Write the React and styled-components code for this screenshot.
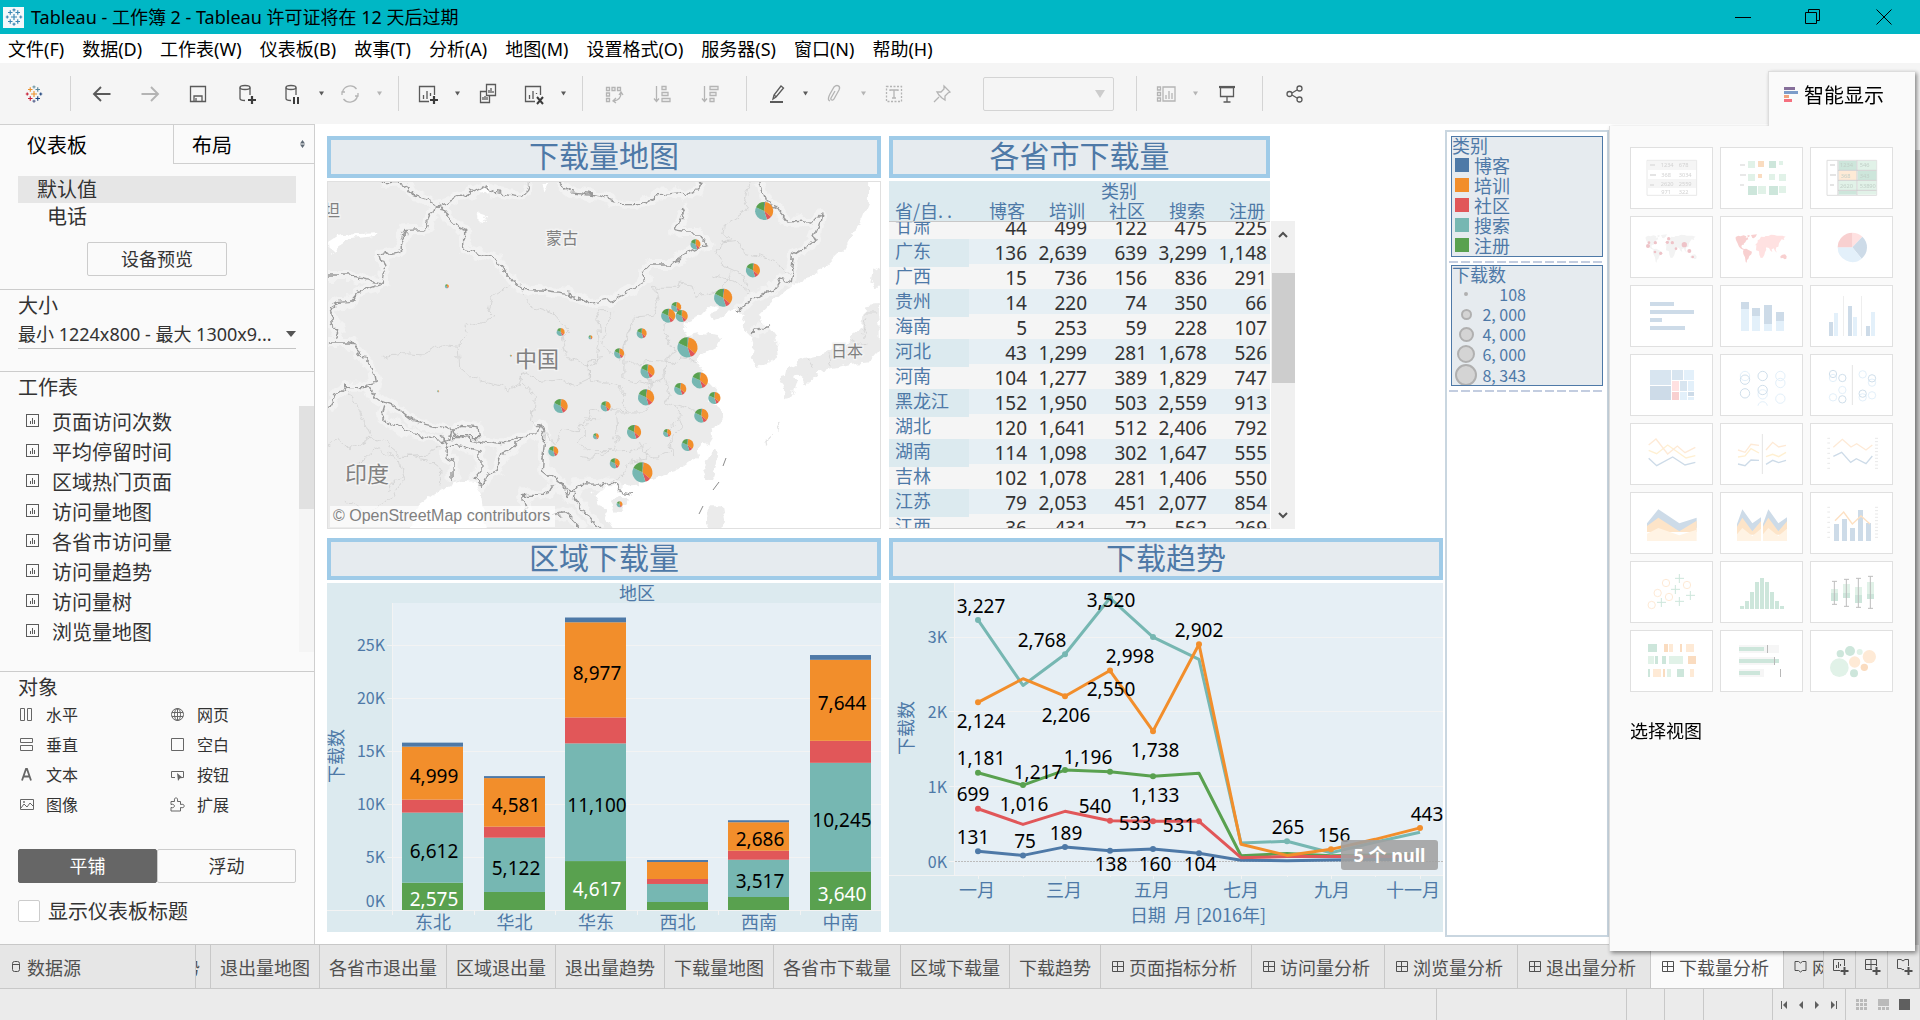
import React from 'react';
import styled, { createGlobalStyle } from 'styled-components';

const BLUE = '#4e79a7';
const ORANGE = '#f28e2b';
const RED = '#e15759';
const TEAL = '#76b7b2';
const GREEN = '#59a14f';

const chartFont = '"Noto Sans CJK SC", sans-serif';
const numberFont = '"Noto Sans", sans-serif';

const GlobalStyle = createGlobalStyle`
    * { box-sizing:border-box; }
    body {
        margin:0;
        overflow:hidden;
        font-family:"Noto Sans", "Noto Sans CJK SC", sans-serif;
        font-size:18px;
        color:#333333;
    }
    button, select, input { font:inherit; color:inherit; }
    button { padding:0; border:0; background:none; }
    svg { display:block; flex:none; }
    ul { margin:0; padding:0; list-style:none; }
`;

const Window = styled.div`
    position:relative;
    display:flex;
    flex-direction:column;
    height:100vh;
    background:#ffffff;
`;

/* ---------- title, menu, toolbar ---------- */

const TitleBar = styled.header`
    display:flex;
    align-items:center;
    height:34px;
    padding-left:3px;
    background:#00b7c5;
    color:#000000;
`;

const AppBadge = styled.span`
    display:flex;
    align-items:center;
    justify-content:center;
    width:21px;
    height:21px;
    margin-right:7px;
    background:#f4f8fa;
`;

const TitleText = styled.span`
    flex:1;
    line-height:34px;
`;

const WindowButton = styled.button`
    display:flex;
    align-items:center;
    justify-content:center;
    width:70px;
    height:34px;
    &:last-child { width:72px; }
`;

const MenuBar = styled.nav`
    display:flex;
    gap:18px;
    height:29px;
    padding-left:8px;
    color:#000000;
`;

const MenuItem = styled.button`
    line-height:31px;
`;

const Toolbar = styled.div`
    display:flex;
    align-items:center;
    height:61px;
    padding-left:10px;
    background:#f5f5f5;
`;

const ToolButton = styled.button`
    display:flex;
    align-items:center;
    justify-content:center;
    width:${p => (p.$menu ? 44 : 48)}px;
    height:34px;
    color:${p => (p.$off ? '#b4b4b4' : '#5a5a5a')};
`;

const Caret = styled.button`
    width:14px;
    height:34px;
    display:flex;
    align-items:center;
    justify-content:center;
    color:${p => (p.$off ? '#b4b4b4' : '#5a5a5a')};
`;

const Divider = styled.span`
    width:1px;
    height:35px;
    margin:0 7px 0 12px;
    background:#d4d4d4;
`;

const FitWrap = styled.div`
    display:flex;
    align-items:center;
    width:131px;
    height:34px;
    margin:0 10px 0 17px;
    padding-right:8px;
    border:1px solid #d4d4d4;
    border-radius:2px;
    color:#cccccc;
`;

const FitSelect = styled.select`
    flex:1;
    height:32px;
    border:0;
    background:none;
    appearance:none;
`;

/* ---------- left pane ---------- */

const Body = styled.div`
    flex:1;
    display:flex;
    min-height:0;
`;

const SidePane = styled.aside`
    display:flex;
    flex-direction:column;
    width:315px;
    background:#fafafa;
    border-top:1px solid #d0d0d0;
    border-right:1px solid #cfcfcf;
    font-size:20px;
`;

const SideTabs = styled.div`
    display:flex;
    height:39px;
    color:#000000;
`;

const SideTab = styled.button`
    display:flex;
    align-items:center;
    justify-content:space-between;
    width:${p => (p.$active ? 173 : 141)}px;
    padding:0 9px 0 ${p => (p.$active ? 27 : 18)}px;
    border-left:${p => (p.$active ? 0 : 1)}px solid #cfcfcf;
    border-bottom:${p => (p.$active ? 0 : 1)}px solid #cfcfcf;
`;

const Section = styled.section`
    height:${p => p.$height}px;
    padding:0 18px;
    border-bottom:${p => (p.$last ? 0 : 1)}px solid #cccccc;
`;

const SectionTitle = styled.div`
    height:${p => p.$height || 31}px;
    line-height:31px;
`;

const Device = styled.div`
    height:27px;
    line-height:28px;
    padding-left:${p => (p.$active ? 19 : 29)}px;
    background:${p => (p.$active ? '#e6e6e6' : 'none')};
`;

const PreviewButton = styled.button`
    display:block;
    width:140px;
    height:34px;
    margin:12px auto 0;
    border:1px solid #cccccc;
    border-radius:2px;
    font-size:18px;
    line-height:32px;
`;

const SizeRow = styled.div`
    display:flex;
    align-items:center;
    height:30px;
    border-bottom:1px solid #c4c4c4;
    color:#555555;
`;

const SizeSelect = styled.select`
    flex:1;
    min-width:0;
    height:29px;
    padding:0;
    border:0;
    background:none;
    appearance:none;
    font-size:18px;
    color:#333333;
`;

const SheetArea = styled.div`
    display:flex;
    justify-content:space-between;
    height:246px;
    margin-right:-18px;
`;

const SheetItem = styled.li`
    display:flex;
    align-items:center;
    gap:12px;
    height:30px;
    padding-left:8px;
    color:#333333;
    svg { color:#5a5a5a; }
`;

const ScrollTrack = styled.div`
    width:15px;
    background:#f5f5f5;
`;

const ScrollThumb = styled.div`
    height:103px;
    background:#e1e1e1;
`;

const ObjectGrid = styled.div`
    display:grid;
    grid-template-columns:151px 1fr;
    grid-auto-rows:30px;
    font-size:16px;
`;

const ObjectItem = styled.button`
    display:flex;
    align-items:center;
    gap:12px;
    padding-left:1px;
    svg { color:#666666; }
`;

const Toggle = styled.div`
    display:flex;
    height:34px;
    margin-top:30px;
    font-size:18px;
`;

const ToggleButton = styled.button`
    flex:1;
    border:1px solid ${p => (p.$active ? '#666666' : '#cccccc')};
    border-radius:2px;
    background:${p => (p.$active ? '#666666' : '#fafafa')};
    color:${p => (p.$active ? '#ffffff' : '#333333')};
    line-height:32px;
`;

const CheckLabel = styled.label`
    display:flex;
    align-items:center;
    gap:8px;
    margin-top:13px;
`;

const CheckBox = styled.input`
    appearance:none;
    width:22px;
    height:22px;
    margin:0;
    border:1px solid #cccccc;
    border-radius:2px;
    background:#ffffff;
`;

/* ---------- dashboard ---------- */

const Dashboard = styled.main`
    flex:1;
    display:flex;
    gap:2px;
    padding:6px 311px 6px 12px;
    min-width:0;
`;

const Tiles = styled.div`
    flex:1;
    display:grid;
    grid-template-columns:1fr 1fr;
    grid-auto-rows:min-content;
    gap:9px 8px;
    padding-top:6px;
`;

const Tile = styled.section`
    min-width:0;
`;

const TileTitle = styled.h2`
    width:${p => p.$width || '100%'};
    height:42px;
    margin:0 0 3px;
    border:4px solid #9fcbe8;
    background:#e6ebef;
    color:${BLUE};
    font:400 30px/28px ${chartFont};
    text-align:center;
`;

const Chart = styled.svg`
    width:100%;
    height:auto;
`;

const MapFrame = styled.div`
    position:relative;
    border:1px solid #e0e0e0;
`;

const TableArea = styled.div`
    display:flex;
    align-items:flex-end;
    height:348px;
`;

const DataTable = styled.table`
    display:flex;
    flex-direction:column;
    width:381px;
    height:348px;
    font-family:${chartFont};
    color:${BLUE};
    border-bottom:1px solid #d0d0d0;
`;

const Head = styled.thead`
    display:block;
    height:41px;
    background:#dceaef;
    border-bottom:1px solid #c8c8c8;
`;

const Rows = styled.tbody`
    display:block;
    flex:1;
    overflow:hidden;
    tr:first-child { margin-top:-8px; }
    tr:nth-child(even) { background:#e6eff4; }
    tr:nth-child(odd) { background:#f5f5f5; }
    tr:nth-child(even) th { background:#dceaef; }
`;

const Row = styled.tr`
    display:grid;
    grid-template-columns:80px repeat(5, 60px);
    height:${p => p.$height}px;
`;

const HeadCell = styled.th`
    grid-column:${p => p.$col || 'auto'};
    padding:0 ${p => (p.$align === 'right' ? 4 : 0)}px 0 ${p => (p.$align === 'left' ? 6 : 0)}px;
    font-weight:400;
    line-height:18px;
    text-align:${p => p.$align};
    white-space:nowrap;
`;

const NameCell = styled.th`
    padding:0 0 0 6px;
    font-weight:400;
    line-height:22px;
    text-align:left;
`;

const NumCell = styled.td`
    padding:0 2px 0 0;
    font-family:${numberFont};
    font-size:19px;
    line-height:28px;
    text-align:right;
    color:#333333;
`;

const TableScroll = styled.div`
    display:flex;
    flex-direction:column;
    align-items:center;
    width:24px;
    height:308px;
    margin-left:1px;
    padding:10px 0;
    background:#f0f0f0;
    color:#505050;
`;

const TableThumb = styled.div`
    width:23px;
    height:110px;
    margin:35px 0 auto;
    background:#cdcdcd;
`;

const NullBadge = styled.button`
    position:absolute;
    right:5px;
    bottom:62px;
    width:97px;
    height:30px;
    border-radius:3px;
    background:rgba(160, 160, 160, 0.88);
    color:#ffffff;
    font-weight:700;
    line-height:30px;
`;

const TrendFrame = styled.div`
    position:relative;
`;

const LegendPane = styled.aside`
    width:164px;
    height:807px;
    padding:4px;
    border:2px solid #c9d6e0;
    font-family:${chartFont};
    color:${BLUE};
`;

const LegendBox = styled.div`
    height:121px;
    border:1px solid ${BLUE};
    background:#e6ebef;
    line-height:16px;
    overflow:hidden;
`;

const LegendTitle = styled.div`
    height:18px;
`;

const LegendItem = styled.div`
    display:flex;
    align-items:center;
    gap:5px;
    height:20px;
    padding-left:3px;
`;

const Swatch = styled.span`
    width:14px;
    height:14px;
    background:${p => p.$color};
`;

const SizeItem = styled.div`
    display:grid;
    grid-template-columns:24px 48px;
    align-items:center;
    height:20px;
    padding-left:2px;
    font-size:16px;
    text-align:right;
    white-space:nowrap;
`;

const Dot = styled.span`
    justify-self:center;
    width:${p => p.$size}px;
    height:${p => p.$size}px;
    border:2px solid #b0b0b0;
    border-radius:50%;
    background:#d4d4d4;
`;

const DashLine = styled.div`
    height:2px;
    margin:4px 0 2px -2px;
    background:repeating-linear-gradient(90deg, #c3cde0 0 9px, transparent 9px 12px);
`;

/* ---------- show me ---------- */

const ShowMe = styled.aside`
    position:absolute;
    top:71px;
    right:5px;
    width:306px;
    filter:drop-shadow(2px 2px 2px rgba(0, 0, 0, 0.45));
    color:#000000;
`;

const ShowMeTab = styled.div`
    display:flex;
    align-items:center;
    gap:6px;
    width:147px;
    height:55px;
    margin-left:auto;
    padding:0 0 9px 15px;
    background:#fafafa;
    border-top:1px solid #dddddd;
    border-left:1px solid #dddddd;
    font-size:20px;
`;

const ShowMeBody = styled.div`
    height:825px;
    padding:21px 20px;
    background:#fafafa;
    border-left:1px solid #dddddd;
`;

const Cards = styled.div`
    display:grid;
    grid-template-columns:repeat(3, 83px);
    grid-auto-rows:62px;
    gap:7px;
`;

const Card = styled.button`
    display:flex;
    border:1px solid #e0e0e0;
    background:#ffffff;
`;

const CardArt = styled.svg`
    width:81px;
    height:60px;
`;

const Hint = styled.p`
    margin:25px 0 0;
    line-height:28px;
`;

const EdgeBar = styled.div`
    position:absolute;
    top:124px;
    right:0;
    width:5px;
    height:820px;
    background:linear-gradient(#f5f5f5 26px, #c8c8c8 26px);
`;

/* ---------- bottom ---------- */

const SheetTabs = styled.nav`
    display:flex;
    height:45px;
    background:#e6e6e6;
    border-top:1px solid #c8c8c8;
    border-bottom:1px solid #c8c8c8;
    color:#505050;
`;

const SheetTab = styled.button`
    display:flex;
    flex:none;
    align-items:center;
    gap:5px;
    padding:0 ${p => (p.$icon ? 14 : 9)}px 0 ${p => (p.$icon ? 11 : 9)}px;
    border-right:1px solid #c8c8c8;
    background:${p => (p.$active ? '#fafafa' : 'none')};
    white-space:nowrap;
`;

const SourceTab = styled(SheetTab)`
    width:196px;
    padding-left:12px;
    gap:6px;
`;

const CutTab = styled(SheetTab)`
    justify-content:${p => (p.$start ? 'flex-end' : 'flex-start')};
    flex:${p => (p.$start ? 'none' : '1')};
    width:15px;
    min-width:0;
    padding:0 ${p => (p.$start ? 10 : 0)}px 0 ${p => (p.$start ? 0 : 10)}px;
    overflow:hidden;
`;

const AddTab = styled(SheetTab)`
    justify-content:center;
    width:32px;
    padding:0;
`;

const StatusBar = styled.footer`
    display:flex;
    justify-content:flex-end;
    height:31px;
    background:#ebebeb;
    color:#5f5f5f;
`;

const StatusCell = styled.div`
    display:flex;
    align-items:center;
    justify-content:space-evenly;
    width:${p => p.$width}px;
    border-left:1px solid #c8c8c8;
`;

/* ---------- icons ---------- */

const Line = ({ size = 24, children, ...rest }) => (
    <svg width={size} height={size} viewBox="0 0 24 24" fill="none" stroke="currentColor" strokeWidth="1.3" {...rest}>
        {children}
    </svg>
);

const crosses = [
    [12, 12, 4, '#eb912c'], [7, 6, 3, '#eb912c'], [17, 6, 3, '#59879b'],
    [7, 18, 3, '#c72037'], [17, 18, 3, '#1f457e'], [12, 2.5, 2, '#7199a6'],
    [12, 21.5, 2, '#5b6591'], [3, 12, 2, '#c72037'], [21, 12, 2, '#1f457e'],
];

function Logo({ color }) {
    return (
        <svg width="18" height="18" viewBox="0 0 24 24" strokeWidth="1.5">
            {crosses.map(([x, y, r, c]) => (
                <path key={`${x}-${y}`} d={`M${x - r} ${y}H${x + r}M${x} ${y - r}V${y + r}`} stroke={color || c} />
            ))}
        </svg>
    );
}

const Down = ({ size = 5 }) => (
    <svg width={size} height={size} viewBox="0 0 10 10"><path d="M0 1h10L5 9z" fill="currentColor" /></svg>
);

const WideDown = () => (
    <svg width="10" height="6"><path d="M0 0h10L5 6z" fill="currentColor" /></svg>
);

const SheetIcon = ({ size = 14 }) => (
    <svg width={size} height={size} viewBox="0 0 14 14" fill="none" stroke="currentColor">
        <rect x=".5" y=".5" width="12" height="12" />
        <path d="M4.5 10V7M6.5 10V4M8.5 10V6" />
    </svg>
);

const BoardIcon = () => (
    <svg width="12" height="13" viewBox="0 0 12 13" fill="none" stroke="currentColor">
        <path d="M.5 1.5h11v10H.5zM5.5 1.5v10M.5 6.5h11" />
    </svg>
);

const StoryIcon = () => (
    <svg width="13" height="13" viewBox="0 0 13 13" fill="none" stroke="currentColor">
        <path d="M1 1.5h3.5L6.5 3l2-1.5H12v9H8.5L6.5 12l-2-1.5H1z" />
    </svg>
);

const plus = <path d="M18 14v8M14 18h8" stroke="#3c3c3c" strokeWidth="2.2" />;

const tools = [
    { id: 'logo', art: <Logo /> },
    { id: 's1', sep: true },
    { id: 'back', art: <Line><path d="M20.5 12H4.5M11 5l-7 7 7 7" strokeWidth="1.9" /></Line> },
    { id: 'forward', off: true, art: <Line><path d="M3.5 12h16M13 5l7 7-7 7" strokeWidth="1.9" /></Line> },
    { id: 'save', art: <Line><path d="M4.5 4.5h15v15h-15zM8 19v-5h8v5M10 19v-3" /></Line> },
    { id: 'data', art: <Line><ellipse cx="11" cy="5.5" rx="5" ry="2" /><path d="M6 5.5v11c0 1 2 2 5 2M16 5.5V13" />{plus}</Line> },
    { id: 'pause', menu: true, art: <Line><ellipse cx="11" cy="5.5" rx="5" ry="2" /><path d="M6 5.5v11c0 1 2 2 5 2M16 5.5V13" /><path d="M14 15v7M18 15v7" stroke="#3c3c3c" strokeWidth="2" /></Line> },
    { id: 'refresh', menu: true, off: true, art: <Line><path d="M4.5 10a8 8 0 0 1 14-3M19.5 14a8 8 0 0 1-14 3M4 13v-3h3M20 11v3h-3" /></Line> },
    { id: 's2', sep: true },
    { id: 'sheet', menu: true, art: <Line><path d="M13 19.5H3.5v-15h15V13M7.5 17v-4M11 17V9M14.5 14v-3" />{plus}</Line> },
    { id: 'copy', art: <Line><path d="M10.5 2.5h9v11h-9zM10 9.5H4.5v11h9V14M13 11V8M15 11V6M17 11V9M7 18v-3M9 18v-4M11 18v-3" /></Line> },
    { id: 'clear', menu: true, art: <Line><path d="M13 19.5H3.5v-15h15V13M7.5 17v-4M11 17V9M14.5 12v-1" /><path d="M15 15l6 7M21 15l-6 7" stroke="#3c3c3c" strokeWidth="2" /></Line> },
    { id: 's3', sep: true },
    { id: 'swap', off: true, art: <Line><path d="M4.5 5.5h3v3h-3zM10 5.5h3v3h-3zM15.5 5.5h3v3h-3zM4.5 11h3v3h-3zM4.5 16.5h3v3h-3zM19 11c0 5-2 7-7 8M17 13l2-3 2 3M14 16l-3 3 3 2" /></Line> },
    { id: 'asc', off: true, art: <Line><path d="M6.5 4v15M4 16.5l2.5 3 2.5-3M12 4.5h4v3h-4zM12 10.5h6v3h-6zM12 16.5h8v3h-8z" /></Line> },
    { id: 'desc', off: true, art: <Line><path d="M6.5 4v15M4 16.5l2.5 3 2.5-3M12 4.5h8v3h-8zM12 10.5h6v3h-6zM12 16.5h4v3h-4z" /></Line> },
    { id: 's4', sep: true },
    { id: 'mark', menu: true, art: <Line><path d="M9 17l1-4 7-9 2.5 2L12 15zM10 13l2.5 2" /><path d="M6 20h13" strokeWidth="2" /></Line> },
    { id: 'clip', menu: true, off: true, art: <Line><path d="M8 19c-3-1-1-5 0-7l4-7c3-3 7-1 5 3l-5 9c-1 2-4 1-3-1l4-7" /></Line> },
    { id: 'text', off: true, art: <Line><path d="M4.5 4.5h15v15h-15z" strokeDasharray="2 1.5" /><path d="M8 9V8h8v1M12 8v8M10 16h4" /></Line> },
    { id: 'pin', off: true, art: <Line><path d="M14 4l6 6-2 1-3 3v4l-3-2-3-3-2-3 4 0 3-3zM9 15l-5 5" /></Line> },
    { id: 'fit', fit: true },
    { id: 's5', sep: true },
    { id: 'cards', menu: true, off: true, art: <Line><path d="M3.5 5h3v3h-3zM3.5 10.5h3v3h-3zM3.5 16h3v3h-3zM9 5h12v14H9zM12 17v-4M15 17V9M18 17v-6" /></Line> },
    { id: 'present', art: <Line><path d="M6.5 5.5h13v9h-13zM13 15v5M9.5 20h7" /><path d="M5 5h16" strokeWidth="2.2" /></Line> },
    { id: 's6', sep: true },
    { id: 'share', art: <Line><circle cx="7.5" cy="12" r="2.5" /><circle cx="17.5" cy="6.5" r="2.5" /><circle cx="17.5" cy="17.5" r="2.5" /><path d="M10 11l5-3M10 13l5 3" /></Line> },
];

const menus = ['文件(F)', '数据(D)', '工作表(W)', '仪表板(B)', '故事(T)', '分析(A)', '地图(M)', '设置格式(O)', '服务器(S)', '窗口(N)', '帮助(H)'];

const sheets = ['页面访问次数', '平均停留时间', '区域热门页面', '访问量地图', '各省市访问量', '访问量趋势', '访问量树', '浏览量地图'];

const Small = ({ children }) => (
    <svg width="15" height="15" viewBox="0 0 15 15" fill="none" stroke="currentColor">{children}</svg>
);

const objects = [
    ['水平', <Small><path d="M1.5 1.5h4v12h-4zM8.5 1.5h4v12h-4z" /></Small>],
    ['网页', <Small><circle cx="7.5" cy="7.5" r="6" /><ellipse cx="7.5" cy="7.5" rx="3" ry="6" /><path d="M7.5 1.5v12M2 5.5h11M2 9.5h11" /></Small>],
    ['垂直', <Small><path d="M1.5 1.5h12v4h-12zM1.5 8.5h12v5h-12z" /></Small>],
    ['空白', <Small><path d="M1.5 1.5h12v12h-12z" /></Small>],
    ['文本', <Small><path d="M3 13.5L7 2h1l4 11.5M4.5 9.5h6" strokeWidth="1.8" /></Small>],
    ['按钮', <Small><path d="M5 10.5H1.5v-6h12v6H12" /><path d="M7 6l6 5-3 .2L8 14z" fill="currentColor" stroke="none" /></Small>],
    ['图像', <Small><path d="M1.5 2.5h13v10h-13zM2 11l3-4 3 3 3-4 3 3" /><circle cx="5" cy="5" r=".6" /></Small>],
    ['扩展', <Small><path d="M1 4.5h3.5C3.5-.5 8.5-.5 7.5 4.5H10.5V7.5C15.5 6 15.5 12 10.5 10.5V14H1V10.5C5.5 12 5.5 6 1 7.5z" /></Small>],
];

/* ---------- map ---------- */

const water = [
    'M1508 160L1507 240 1485 300 1440 370 1395 420 1350 455 1325 462 1290 490 1240 530 1207 566 1225 600 1258 650 1262 690 1230 715 1200 722 1188 700 1195 660 1183 625 1160 600 1168 570 1145 556 1120 560 1082 588 1070 578 1092 548 1072 538 1045 570 1010 586 998 610 1012 632 1050 626 1112 634 1098 662 1060 684 1035 708 1062 760 1096 800 1072 828 1102 850 1104 872 1085 912 1058 960 1030 1000 985 1032 920 1052 870 1075 832 1080 834 1106 818 1104 814 1080 786 1076 752 1108 780 1160 826 1240 1570 1240 1570 160z',
    'M248 1240L272 1140 328 1096 372 1076 400 1066 428 1070 444 1110 448 1160 466 1240z',
    'M22 350L50 330 150 324 148 332 80 342 50 362 36 386 24 374z',
    'M432 276l12-10 10 4-6 12-14 10z',
    'M438 192l20-8 14 6-16 18z',
    'M612 170l16 0-10 24z',
];

const islands = [
    'M1085 976l12 8-6 32-12 38-16 8-8-30 14-38z',
    'M806 1122l26-8 16 10-12 26-26 6-10-18z',
    'M1070 1146l30 0 6 40-12 60-32 0z',
    'M1570 412l-47 20-6 38 12 20 41 0z',
    'M1500 540L1534 536 1542 600 1543 670 1513 708 1473 712 1423 726 1373 736 1333 762 1313 748 1283 754 1290 722 1333 698 1393 682 1433 668 1463 632 1493 612z',
    'M1270 752l30-8 14 26-12 40-20 6-4-34-18-8z',
    'M1322 752l36-14 8 14-34 24z',
];

const provinces = [
    'M530 478L476 516 468 560 480 574 394 600 408 634 380 664 384 726 420 760 500 784 520 800 550 780 562 740 600 766 660 760 700 780 740 760 742 704 778 700',
    'M170 696L230 682 290 686 340 658 390 664',
    'M554 470l0 40 30 36 60 20 40 50-20 20 14 60 60 30 20-10 10-66-6-64 12-30 26 0-12 46-10 54 26 34',
    'M560 740l0 34 30 46-8 60 50 60 16 12 20-40 36 10 10-22 24 2',
    'M740 704l2 60 74 16 24 30-12 14 20 30-60-6-46 6-8 26 40 0',
    'M824 700l20-70 12-36 20-20 44-4 10-30-10-54 60 0 6-16 40 6 6 40 64-20 24-30 10-30',
    'M840 716l70-8 54 4 34-14 44 12M860 580l-24 90 0 90 70 16 44-14-4-60 34-20-30-60 6-60',
    'M906 760l10 60-24 40-80 0 6 70-14 46-56 0-40-20 20-30-8-30 26-14',
    'M950 740l16 50-20 40 30 10 20 30-40 50 10 54-40 22-38-10-12-40',
    'M976 840l60 20 20-10M990 870l8 30-32 40 4 50M906 970l-8 30-50 10-20 46-34 10',
    'M716 990l30 6 40-14 60-4 50-16',
    'M1186 170l-20 70 10 14-64 46-4 24 20 20-30 14-6 26 16 36 60 30 6 30',
    'M1110 352l40-4 10 30 40 10 40 16 50 36M1080 450l60 16 40 36',
    'M22 960l30-20 30 30 60-30 40 14 46 40 60-4 40-30M90 1030l60-60 70 30 14 60-40 60-70 40-50-30',
    'M70 790l30 50 40 90-20 20M230 990l60 10 50 40-10 40M180 1090l46-40',
    'M1500 560l30 0M1510 576l-20 60M1340 700l20 30M1400 690l10 30M1460 640l40 20',
];

const borders = [
    'M170 172l50 0 24 14 16 24 40 14 30 20 14 20 36 40 18 8 0 60 90 28 20 34 46 58 50 2 80 10 60 30 60-12 60-34 34-22-8-30 16-20 60 0 60-40 30-14 14-4-30-38-40 0-22-4 24-60-6-14',
    'M334 240l50-24 60-34 42 22 60 10 24-14 6-28',
    'M658 172l26 26 90 14 60 26 50 0 50-30 60-6 10 12 30-18 12-24',
    'M334 240l-30 20-12 50-56 2-16 64-54 14 14 50-6 36-70 26-24 30-30 2-22 16 6 46 20 20-8 20',
    'M22 452l60 0 40 10 50 12',
    'M22 650l60 0 30 40 32 40 8 44-20 6 20 40 50 20 60 50 90 24 46 26 80 12 40 4 30-24 46-4 10-30 14 34-6 100 46 40 20 40 26-36 60 4 40-12 20 30 34 10',
    'M178 846l-8 30 60 40 100 30 30-10 4-26M370 920l20-20 42 4 4 30-66 0z',
    'M330 930l20 20 0 50 16 10 0 60M350 960l30 0 60 16 0 60-16 20 20 30 20-40 26-10 14-56 30-16 24-30',
    'M22 850l30-50 20-16 60 0M640 1080l-20 30-60 0 6 40-20 20M650 1060l24 30 30 10-4 20 30 40 40 50M640 1170l40-10 46 54',
    'M1210 170l16 60 30 14 34 46 66-4 22-20-6 40-20 50-50 36-8 80-30-10-20 36-50 16-50 50',
    'M1188 622l20-4 12-14 18-6',
];

const pies = [
    [1222, 257, 9], [1033, 357, 5], [1191, 435, 7], [1109, 517, 9], [980, 545, 5], [958, 571, 7],
    [995, 572, 6], [349, 483, 2], [662, 620, 4], [744, 636, 2], [885, 624, 5], [823, 684, 5],
    [1011, 666, 10], [525, 691, 1], [901, 738, 7], [1045, 765, 8], [991, 791, 6], [897, 816, 8],
    [1085, 818, 6], [325, 798, 1], [662, 842, 7], [786, 843, 5], [1049, 871, 7], [864, 920, 7],
    [955, 923, 4], [759, 933, 3], [1011, 959, 6], [642, 978, 5], [811, 1014, 5], [887, 1041, 10], [824, 1137, 3],
];

const slices = [[0.02, BLUE], [0.36, ORANGE], [0.45, RED], [0.82, TEAL], [1, GREEN]];

const mapX = x => (x - 22) / 2.751;
const mapY = y => (y - 170) / 3;

function Pie({ x, y, r, parts = slices }) {
    let from = 0;
    return parts.map(([to, color]) => {
        const a = from * Math.PI * 2;
        const b = to * Math.PI * 2;
        const large = to - from > 0.5 ? 1 : 0;
        from = to;
        const d = `M${x} ${y}L${x + r * Math.sin(a)} ${y - r * Math.cos(a)}A${r} ${r} 0 ${large} 1 ${x + r * Math.sin(b)} ${y - r * Math.cos(b)}z`;
        return <path key={color} d={d} fill={color} />;
    });
}

function DownloadMap() {
    return (
        <MapFrame>
            <Chart viewBox="0 0 552 346">
                <defs>
                    {/* roughens coastlines and borders */}
                    <filter id="rough" x="-5%" y="-5%" width="110%" height="110%">
                        <feTurbulence type="fractalNoise" baseFrequency="0.09" numOctaves="3" seed="4" result="noise" />
                        <feDisplacementMap in="SourceGraphic" in2="noise" scale="11" xChannelSelector="R" yChannelSelector="G" />
                    </filter>
                </defs>
                <rect width="552" height="346" fill="#ebebeb" />
                <g filter="url(#rough)">
                    <g transform="scale(0.3635 0.3333) translate(-22 -170)" fill="none" strokeLinejoin="round">
                        {borders.map(d => <path key={d} d={d} stroke="#f2f2f2" strokeWidth="30" />)}
                        {water.map(d => <path key={d} d={d} fill="#ffffff" />)}
                        {islands.map(d => <path key={d} d={d} fill="#ebebeb" />)}
                        {provinces.map(d => <path key={d} d={d} stroke="#cccccc" strokeWidth="2" />)}
                        {borders.map(d => <path key={d} d={d} stroke="#999999" strokeWidth="4" />)}
                        <path d="M1270 890l-14 26M1240 930l-16 24" stroke="#e4e4e4" strokeWidth="4" />
                    </g>
                </g>
                <path d="M398 276l-3 8M391 300l-6 8M375 324l-4 8" stroke="#8c8c8c" />
                <g fontFamily={chartFont} fill="#808080" stroke="#f2f2f2" strokeWidth="3" paintOrder="stroke" textAnchor="middle">
                    <text x="4" y="34" fontSize="16">坦</text>
                    <text x="234" y="62" fontSize="16">蒙古</text>
                    <text x="519" y="175" fontSize="16">日本</text>
                    <text x="209" y="185" fontSize="22">中国</text>
                    <text x="39" y="300" fontSize="22">印度</text>
                </g>
                {pies.map(([x, y, r]) => <Pie key={`${x}-${y}`} x={mapX(x)} y={mapY(y)} r={r} />)}
                <rect x="2" y="324" width="225" height="21" fill="#ffffff" fillOpacity="0.7" />
                <text x="5" y="339" fontSize="16" fontFamily='"Liberation Sans", sans-serif' fill="#808080">© OpenStreetMap contributors</text>
            </Chart>
        </MapFrame>
    );
}

/* ---------- table ---------- */

const kinds = ['博客', '培训', '社区', '搜索', '注册'];

const provinceRows = [
    ['甘肃', '44', '499', '122', '475', '225'],
    ['广东', '136', '2,639', '639', '3,299', '1,148'],
    ['广西', '15', '736', '156', '836', '291'],
    ['贵州', '14', '220', '74', '350', '66'],
    ['海南', '5', '253', '59', '228', '107'],
    ['河北', '43', '1,299', '281', '1,678', '526'],
    ['河南', '104', '1,277', '389', '1,829', '747'],
    ['黑龙江', '152', '1,950', '503', '2,559', '913'],
    ['湖北', '120', '1,641', '512', '2,406', '792'],
    ['湖南', '114', '1,098', '302', '1,647', '555'],
    ['吉林', '102', '1,078', '281', '1,406', '550'],
    ['江苏', '79', '2,053', '451', '2,077', '854'],
    ['江西', '36', '431', '72', '562', '269'],
];

function ProvinceTable() {
    return (
        <TableArea>
            <DataTable>
                <Head>
                    <Row $height={20}><HeadCell $col="2 / 7" $align="center">类别</HeadCell></Row>
                    <Row $height={20}>
                        <HeadCell $align="left">省/自. .</HeadCell>
                        {kinds.map(k => <HeadCell key={k} $align="right">{k}</HeadCell>)}
                    </Row>
                </Head>
                <Rows>
                    {provinceRows.map(([name, ...values]) => (
                        <Row key={name} $height={25}>
                            <NameCell>{name}</NameCell>
                            {values.map((v, i) => <NumCell key={kinds[i]}>{v}</NumCell>)}
                        </Row>
                    ))}
                </Rows>
            </DataTable>
            <TableScroll>
                <svg width="10" height="7" viewBox="0 0 10 7" fill="none" stroke="currentColor" strokeWidth="2"><path d="M1 6l4-4 4 4" /></svg>
                <TableThumb />
                <svg width="10" height="7" viewBox="0 0 10 7" fill="none" stroke="currentColor" strokeWidth="2"><path d="M1 1l4 4 4-4" /></svg>
            </TableScroll>
        </TableArea>
    );
}

/* ---------- bars ---------- */

const stack = [GREEN, TEAL, RED, ORANGE, BLUE];

const regions = [
    { name: '东北', values: [2575, 6612, 1226, 4999, 377], labels: [0, 1, 3] },
    { name: '华北', values: [1700, 5122, 1040, 4581, 190], labels: [1, 3] },
    { name: '华东', values: [4617, 11100, 2450, 8977, 450], labels: [0, 1, 3] },
    { name: '西北', values: [755, 1700, 470, 1600, 190], labels: [] },
    { name: '西南', values: [1226, 3517, 850, 2686, 190], labels: [1, 3] },
    { name: '中南', values: [3640, 10245, 2075, 7644, 450], labels: [0, 1, 3] },
];

function RegionBars() {
    return (
        <Chart viewBox="0 0 554 349">
            <rect width="554" height="349" fill="#dceaef" />
            <rect x="66" y="20" width="488" height="307" fill="#e6eff5" />
            <g stroke="#f3f3f3">
                {[62, 115, 168, 221, 274].map(y => <path key={y} d={`M60 ${y}.5H554`} />)}
                <path d="M65.5 20V332M0 327.5H554" />
                {[147, 228, 310, 391, 473].map(x => <path key={x} d={`M${x}.5 327V332`} />)}
            </g>
            <g fontFamily={chartFont} fill={BLUE} fontSize="18" textAnchor="middle">
                <text x="310" y="17">地区</text>
                <text transform="translate(16 173) rotate(-90)">下载数</text>
                {regions.map((r, i) => <text key={r.name} x={106 + i * 81.5} y="346">{r.name}</text>)}
            </g>
            <g fontFamily={chartFont} fill={BLUE} fontSize="16" textAnchor="end">
                {['25K', '20K', '15K', '10K', '5K'].map((t, i) => <text key={t} x="58" y={68 + i * 53}>{t}</text>)}
                <text x="58" y="324">0K</text>
            </g>
            {regions.map((r, i) => {
                const left = Math.round(75 + i * 81.5);
                let y = 327;
                return r.values.map((v, k) => {
                    const h = v * 0.0106;
                    y -= h;
                    return (
                        <g key={stack[k]}>
                            <rect x={left} y={y} width="61" height={h} fill={stack[k]} />
                            {r.labels.includes(k) && (
                                <text x={left + 32} y={y + h / 2 + 10} fontFamily={numberFont} fontSize="19" textAnchor="middle" fill={k === 0 ? '#ffffff' : '#000000'}>
                                    {v.toLocaleString('en-US')}
                                </text>
                            )}
                        </g>
                    );
                });
            })}
        </Chart>
    );
}

/* ---------- trend ---------- */

const months = [89, 134, 176, 221, 264, 310, 352, 398, 442, 486, 531];

const series = [
    { color: BLUE, values: [131, 75, 189, 138, 160, 104, 10, 5, 12, 20, 20], dots: [0, 1, 2, 3, 4, 5] },
    { color: GREEN, values: [1181, 1016, 1217, 1196, 1133, 1175, 70, 100, 70, 80, 90], dots: [0, 1, 2, 3, 4] },
    { color: RED, values: [699, 490, 665, 540, 533, 531, 45, 60, 60, 60, 60], dots: [0, 3, 4, 5] },
    { color: TEAL, values: [3227, 2350, 2768, 3520, 2998, 2700, 240, 265, 110, 250, 385], dots: [0, 2, 3, 4, 7] },
    { color: ORANGE, values: [2124, 2440, 2206, 2550, 1738, 2902, 225, 75, 156, 290, 443], dots: [0, 2, 3, 4, 5, 8, 10] },
];

const trendLabels = [
    ['3,227', 92, 30], ['3,520', 222, 24], ['2,902', 310, 54], ['2,768', 153, 64], ['2,998', 241, 80],
    ['2,550', 222, 113], ['2,206', 177, 139], ['2,124', 92, 145], ['1,738', 266, 174], ['1,181', 92, 182],
    ['1,196', 199, 181], ['1,217', 149, 196], ['1,133', 266, 219], ['699', 84, 218], ['1,016', 135, 228],
    ['540', 206, 230], ['533', 246, 247], ['531', 290, 249], ['131', 84, 261], ['75', 136, 265],
    ['189', 177, 257], ['138', 222, 288], ['160', 266, 288], ['104', 311, 288], ['265', 399, 251],
    ['156', 445, 259], ['443', 538, 238],
];

const monthTicks = [['一月', 88], ['三月', 175], ['五月', 263], ['七月', 352], ['九月', 443], ['十一月', 524]];

const trendY = v => 278 - v * 0.0747;

function TrendLines() {
    return (
        <TrendFrame>
            <Chart viewBox="0 0 554 349">
                <rect width="554" height="349" fill="#dceaef" />
                <rect x="66" width="488" height="292" fill="#e6eff5" />
                <g stroke="#f3f3f3" fill="none">
                    {[54, 128, 203].map(y => <path key={y} d={`M60 ${y}.5H554`} />)}
                    <path d="M65.5 0V292M0 292.5H554M60 278.5H66" />
                    {months.map((x, i) => <path key={x} d={`M${x}.5 292v${i % 2 ? 2 : 4}`} />)}
                    <path d="M66 278.5H554" stroke="#bcbcbc" strokeDasharray="2 1" />
                </g>
                {series.map(s => (
                    <g key={s.color} fill={s.color}>
                        <polyline points={s.values.map((v, i) => `${months[i]},${trendY(v)}`).join(' ')} fill="none" stroke={s.color} strokeWidth="3" strokeLinejoin="round" />
                        {s.dots.map(i => <circle key={i} cx={months[i]} cy={trendY(s.values[i])} r="3" />)}
                    </g>
                ))}
                <g fontFamily={numberFont} fontSize="19" fill="#000000" textAnchor="middle">
                    {trendLabels.map(([t, x, y]) => <text key={t} x={x} y={y}>{t}</text>)}
                </g>
                <g fontFamily={chartFont} fill={BLUE} fontSize="18" textAnchor="middle">
                    <text transform="translate(24 145) rotate(-90)">下载数</text>
                    {monthTicks.map(([t, x]) => <text key={t} x={x} y="314">{t}</text>)}
                    <text x="309" y="339" xmlSpace="preserve">日期  月 [2016年]</text>
                </g>
                <g fontFamily={chartFont} fill={BLUE} fontSize="16" textAnchor="end">
                    {['3K', '2K', '1K', '0K'].map((t, i) => <text key={t} x="58" y={60 + i * 75}>{t}</text>)}
                </g>
            </Chart>
            <NullBadge>5 个 null</NullBadge>
        </TrendFrame>
    );
}

/* ---------- chart cards ---------- */

const continents = [
    ['M0 6l8-4 6 2 10-3 8 3-2 5 6-2 2 6-6 3-3 6-5 4 0 4-4-1-3 4 2 6 6 3-1 3-8-4-6-6-5-12-3-6-2-5z', 'n-america'],
    ['M25 42l7-1 8 5 9 4-2 8-6 5-3 8-4 4-1 8-3-2-2-14-5-10-1-8z', 's-america'],
    ['M34 2l6-2 3 3-5 4zM46 0l18-2-4 7-6 5-4-1z', 'greenland'],
    ['M62 33l6-5 8 0 10 4 6 12 -4 8-2 8-5 8-6 1-4-10-1-10-9-3z', 'africa'],
    ['M66 22l0-6 6-3 4-8 10 1 4-3 8 0 8-4 10 1 8 2 16 0 10 3-6 4 2 6-8-2-4 6-4 6-2 10-6 2-2 8 4 8-6-5-4-8-6 3 2 8-5-3-5-9-8-2-2 6-8 3-3-9-4-3-10 0-5-4-4 3z', 'eurasia'],
    ['M134 64l6-5 8-1 5 6-1 7-5 2-5-4-7 1z', 'australia'],
];

const World = ({ west, east }) => continents.map(([d, name]) => (
    <path key={name} transform="translate(47 57)" d={d} fill={name === 'africa' || name === 'eurasia' ? east : west} />
));

const blocks = (list, fill) => list.map(([x, y, w, h, c]) => <rect key={`${x}-${y}`} x={x} y={y} width={w} height={h} fill={c || fill} />);
const rings = (list, color) => list.map(([x, y, r, c]) => <circle key={`${x}-${y}`} cx={x} cy={y} r={r} fill="none" stroke={c || color} strokeWidth="3" />);
const strokes = list => list.map(([c, p]) => <polyline key={p} points={p} fill="none" stroke={c} strokeWidth="4" />);

const navy = '#cddbe8';
const sky = '#e3f0fa';
const mint = '#cde6db';
const pale = '#e1f2e8';
const peach = '#feead6';
const tan = '#fadcc0';
const rose = '#f8d0d0';
const pink = '#ffe1e1';

const ticks = <path d="M52 46h8m-8 14h8m-8 16h8m-8 15h8m-8 15h8m-8 15h8m-8 15h8M195 46h9m-9 10h9m-9 10h9m-9 10h9m-9 10h9m-9 10h9m-9 10h9m-9 10h9m-9 10h9m-9 10h9" stroke="#e8e8e8" strokeWidth="3" />;

const cards = {
    文本表: <><path d="M51 40h149v105H51z" fill="#fff" stroke="#e8e8e8" strokeWidth="3" />{blocks([[52, 42, 146, 27], [52, 96, 146, 27]], '#f5f5f5')}{blocks([[60, 51, 15, 6], [60, 81, 18, 6], [60, 111, 12, 6]], '#e4e4e4')}<g fill="#d2d2d2" fontSize="17" fontFamily={numberFont}><text x="92" y="61">1234</text><text x="146" y="61">678</text><text x="94" y="89">368</text><text x="146" y="89">3034</text><text x="92" y="116">2620</text><text x="146" y="116">2559</text><text x="94" y="140">971</text><text x="146" y="140">322</text></g></>,
    热图: <>{blocks([[60, 51, 15, 6], [60, 81, 18, 6], [60, 111, 12, 6]], '#e8e8e8')}{blocks([[84, 42, 21, 21], [84, 81, 21, 21], [114, 117, 24, 24], [147, 81, 18, 18], [177, 42, 12, 12], [177, 81, 21, 21], [177, 117, 21, 21], [84, 117, 27, 27, mint], [147, 42, 21, 21, mint], [147, 117, 27, 27, mint], [114, 42, 18, 18, tan], [114, 81, 12, 12, tan]], pale)}</>,
    突出显示表: <><path d="M51 40h149v105H51z" fill="#fff" stroke="#dedede" strokeWidth="3" />{blocks([[86, 42, 54, 27, mint], [143, 42, 56, 27, pale], [86, 72, 54, 27, peach], [143, 72, 56, 27, mint], [86, 102, 54, 27, pale], [143, 102, 56, 27, pale], [86, 132, 54, 11, mint], [143, 132, 56, 11, pale]])}<path d="M84 41v103M141 41v103M84 70h115M84 100h115M84 130h115" stroke="#cfcfcf" strokeWidth="3" />{blocks([[60, 51, 15, 6], [60, 81, 18, 6], [60, 111, 12, 6]], '#e4e4e4')}<g fill="#c2cfc8" fontSize="17" fontFamily={numberFont}><text x="90" y="61">1234</text><text x="149" y="61">546</text><text x="92" y="92">368</text><text x="149" y="92">343</text><text x="90" y="122">2620</text><text x="149" y="122">53890</text></g></>,
    符号地图: <><World west="#f3f3f3" east="#f3f3f3" />{[[54, 90, 6], [57, 80, 4], [116, 68, 5], [127, 80, 5], [163, 86, 8], [178, 105, 6], [75, 108, 4], [92, 112, 5], [138, 98, 4], [76, 80, 5], [112, 79, 5], [188, 123, 4]].map(([x, y, r]) => <circle key={`${x}-${y}`} cx={x} cy={y} r={r} fill="#eec3c8" />)}</>,
    地图: <World west={rose} east={pink} />,
    饼图: <Pie x={127} y={94} r={44} parts={[[0.12, pink], [0.39, navy], [0.75, sky], [1, rose]]} />,
    水平条: blocks([[60, 51, 72, 12], [60, 75, 132, 12], [60, 99, 36, 12], [60, 123, 105, 12]], navy),
    堆叠条: <>{blocks([[63, 51, 24, 21], [96, 69, 24, 24], [132, 60, 24, 57], [168, 81, 24, 27]], navy)}{blocks([[63, 72, 24, 66], [96, 93, 24, 45], [132, 117, 24, 21], [168, 108, 24, 30]], sky)}</>,
    并排条: <>{blocks([[57, 111, 12, 42], [114, 63, 12, 90], [168, 123, 12, 30]], navy)}{blocks([[72, 84, 12, 69], [129, 96, 12, 57], [183, 81, 12, 72]], sky)}{blocks([[99, 33, 3, 120], [153, 33, 3, 120]], '#eeeeee')}</>,
    树状图: blocks([[60, 48, 63, 45, '#d8e5f0'], [60, 96, 63, 42, navy], [126, 48, 33, 30, '#d8e5f0'], [162, 48, 30, 30, sky], [126, 81, 21, 30, pink], [150, 81, 21, 30, '#d8e5f0'], [174, 81, 18, 30, sky], [126, 114, 21, 24, rose], [150, 114, 21, 24, sky], [174, 114, 18, 12, navy], [174, 129, 18, 9, sky]]),
    圆视图: <>{rings([[75, 66, 14], [128, 121, 14], [181, 66, 14], [181, 87, 14], [181, 134, 14]], sky)}{rings([[75, 77, 14], [75, 118, 14], [128, 66, 14], [128, 108, 14]], '#d0dfeb')}<path d="M114 155c3-16 25-16 28 0" fill="none" stroke={sky} strokeWidth="3" /></>,
    并排圆: <>{rings([[69, 72, 11], [97, 108, 11], [69, 130, 11], [158, 61, 11], [158, 130, 11], [186, 86, 11], [186, 124, 11]], sky)}{rings([[69, 60, 11], [97, 72, 11], [97, 136, 11], [158, 119, 11], [186, 73, 11]], '#d0dfeb')}<path d="M127 33v120" stroke="#e4e4e4" strokeWidth="3" /></>,
    连续线: strokes([['#fff0d2', '56,82 80,92 113,66 168,105 196,98'], [peach, '56,66 78,48 113,93 142,69 165,89 196,73'], [navy, '56,106 80,128 128,102 165,126 196,118']]),
    离散线: <>{strokes([['#fff0d2', '54,102 75,99 93,77 117,90'], [peach, '54,81 75,88 93,64 117,67'], [navy, '54,123 75,128 93,111 117,112'], [peach, '138,81 158,58 176,72 198,67'], ['#fff0d2', '138,101 158,94 176,101 198,88'], [navy, '138,124 158,112 176,119 198,112']])}<path d="M127 33v120" stroke="#e4e4e4" strokeWidth="3" /></>,
    双线: <>{strokes([[peach, '70,73 97,49 123,72 140,62 168,81 187,66'], [navy, '70,100 95,88 122,118 139,107 168,122 187,99']])}{ticks}</>,
    连续面积: <><path d="M51 94l34-42 63 42 52-17v30l-52 13-63-33-34 20z" fill={navy} /><path d="M51 102l34-25 63 41 52-32v34H51z" fill="#fde4c8" /><path d="M51 125l34-17 63 22 52-17v34H51z" fill="#fff3e4" /></>,
    离散面积: <>{[51, 129].map(x => <g key={x} transform={`translate(${x} 0)`}><path d="M0 96l16-44 30 42 26-18v44H0z" fill={navy} /><path d="M0 104l16-27 30 41 26-30v40H0z" fill="#fde4c8" /><path d="M0 127l16-19 30 24 26-22v37H0z" fill="#fff3e4" /></g>)}</>,
    双组合: <>{blocks([[72, 96, 15, 51], [96, 81, 15, 66], [120, 108, 15, 39], [144, 54, 15, 93], [168, 93, 15, 54]], navy)}{strokes([['#fde0c2', '75,86 101,60 127,96 153,72 180,96']])}{ticks}</>,
    散点图: <>{rings([[108, 66, 11], [171, 72, 11], [83, 96, 11], [117, 108, 11], [65, 132, 11]], peach)}<path d="M135 52h27m-14-13v27M123 85h27m-14-13v27M168 103h27m-14-13v27M81 124h27m-14-13v27M135 121h27m-14-13v27" stroke={mint} strokeWidth="3" /></>,
    直方图: blocks([[60, 135, 12, 9], [75, 120, 12, 24], [90, 93, 12, 51], [105, 63, 12, 81], [120, 51, 12, 93], [135, 63, 12, 81], [150, 93, 12, 51], [165, 120, 12, 24], [180, 135, 12, 9]], mint),
    盒须图: <>{blocks([[63, 84, 21, 12], [99, 69, 21, 27], [135, 78, 21, 24], [171, 63, 21, 36]], pale)}{blocks([[63, 96, 21, 24], [99, 96, 21, 15], [135, 102, 21, 24], [171, 99, 21, 15]], mint)}<path d="M73 61v69m-7 0h15M66 61h15M109 55v81m-7 0h15M102 55h15M145 52v87m-7 0h15M138 52h15M181 46v96m-7 0h15M174 46h15" stroke="#bdbdbd" strokeWidth="3" fill="none" /></>,
    甘特图: blocks([[54, 42, 27, 24, mint], [102, 42, 12, 24, tan], [117, 42, 12, 24, peach], [150, 42, 6, 24, tan], [168, 42, 24, 24, peach], [54, 78, 18, 24, pale], [75, 78, 9, 24, mint], [96, 78, 12, 24, mint], [117, 78, 42, 24, pale], [174, 78, 24, 24, tan], [54, 117, 6, 24, mint], [69, 117, 24, 24, peach], [99, 117, 6, 24, tan], [111, 117, 12, 24, pale], [141, 117, 21, 24, mint], [180, 117, 12, 24, peach]]),
    标靶图: <>{blocks([[57, 45, 120, 24], [57, 81, 105, 24], [57, 117, 75, 24]], '#f6f6f6')}{blocks([[57, 51, 75, 12], [57, 87, 120, 12], [57, 123, 63, 12]], mint)}{blocks([[141, 45, 3, 24], [162, 81, 3, 24], [180, 117, 3, 24]], '#b8b8b8')}</>,
    气泡图: [[88, 113, 28, pale], [91, 71, 11, mint], [120, 63, 15, mint], [149, 66, 9, pale], [134, 96, 17, peach], [178, 80, 20, peach], [163, 112, 11, tan], [132, 130, 12, mint]].map(([x, y, r, c]) => <circle key={`${x}-${y}`} cx={x} cy={y} r={r} fill={c} />),
};

/* ---------- bottom tabs ---------- */

const sheetTabs = ['退出量地图', '各省市退出量', '区域退出量', '退出量趋势', '下载量地图', '各省市下载量', '区域下载量', '下载趋势'];
const boardTabs = ['页面指标分析', '访问量分析', '浏览量分析', '退出量分析', '下载量分析'];

const AddMark = ({ children }) => (
    <svg width="20" height="20" viewBox="0 0 20 20" fill="none" stroke="currentColor">
        {children}
        <path d="M14.5 10v8M10.5 14h8" strokeWidth="2" />
    </svg>
);

function App() {
    return (
        <Window>
            <GlobalStyle />
            <TitleBar>
                <AppBadge><Logo color="#3a86b4" /></AppBadge>
                <TitleText>Tableau - 工作簿 2 - Tableau 许可证将在 12 天后过期</TitleText>
                <WindowButton aria-label="最小化"><svg width="16" height="16" stroke="#000"><path d="M0 8.5h16" /></svg></WindowButton>
                <WindowButton aria-label="还原"><svg width="16" height="16" fill="none" stroke="#000"><path d="M.5 3.5h11v11H.5zM3.5 3V.5h11v11H12" /></svg></WindowButton>
                <WindowButton aria-label="关闭"><svg width="16" height="16" stroke="#000"><path d="M.5.5l15 15M15.5.5l-15 15" /></svg></WindowButton>
            </TitleBar>
            <MenuBar>
                {menus.map(m => <MenuItem key={m}>{m}</MenuItem>)}
            </MenuBar>
            <Toolbar>
                {tools.map(t => {
                    if (t.sep) return <Divider key={t.id} />;
                    if (t.fit) return <FitWrap key={t.id}><FitSelect aria-label="适合" disabled /><Down size={10} /></FitWrap>;
                    return (
                        <React.Fragment key={t.id}>
                            <ToolButton $menu={t.menu} $off={t.off} aria-label={t.id}>{t.art}</ToolButton>
                            {t.menu && <Caret $off={t.off} aria-label={`${t.id} menu`}><Down /></Caret>}
                        </React.Fragment>
                    );
                })}
            </Toolbar>

            <Body>
                <SidePane>
                    <SideTabs>
                        <SideTab $active>仪表板</SideTab>
                        <SideTab>布局<svg width="5" height="8" fill="#5f6a75"><path d="M0 3.5L2.5 0 5 3.5zM0 4.5h5L2.5 8z" /></svg></SideTab>
                    </SideTabs>
                    <Section $height={126}>
                        <SectionTitle $height={12} />
                        <Device $active>默认值</Device>
                        <Device>电话</Device>
                        <PreviewButton>设备预览</PreviewButton>
                    </Section>
                    <Section $height={82}>
                        <SectionTitle $height={29}>大小</SectionTitle>
                        <SizeRow>
                            <SizeSelect aria-label="大小"><option>最小 1224x800 - 最大 1300x9...</option></SizeSelect>
                            <WideDown />
                        </SizeRow>
                    </Section>
                    <Section $height={300}>
                        <SectionTitle $height={34}>工作表</SectionTitle>
                        <SheetArea>
                            <ul>
                                {sheets.map(s => <SheetItem key={s}><SheetIcon />{s}</SheetItem>)}
                            </ul>
                            <ScrollTrack><ScrollThumb /></ScrollTrack>
                        </SheetArea>
                    </Section>
                    <Section $height={272} $last>
                        <SectionTitle $height={27}>对象</SectionTitle>
                        <ObjectGrid>
                            {objects.map(([name, icon]) => <ObjectItem key={name}>{icon}{name}</ObjectItem>)}
                        </ObjectGrid>
                        <Toggle>
                            <ToggleButton $active>平铺</ToggleButton>
                            <ToggleButton>浮动</ToggleButton>
                        </Toggle>
                        <CheckLabel><CheckBox type="checkbox" />显示仪表板标题</CheckLabel>
                    </Section>
                </SidePane>

                <Dashboard>
                    <Tiles>
                        <Tile>
                            <TileTitle>下载量地图</TileTitle>
                            <DownloadMap />
                        </Tile>
                        <Tile>
                            <TileTitle $width="381px">各省市下载量</TileTitle>
                            <ProvinceTable />
                        </Tile>
                        <Tile>
                            <TileTitle>区域下载量</TileTitle>
                            <RegionBars />
                        </Tile>
                        <Tile>
                            <TileTitle>下载趋势</TileTitle>
                            <TrendLines />
                        </Tile>
                    </Tiles>
                    <LegendPane>
                        <LegendBox>
                            <LegendTitle>类别</LegendTitle>
                            {[BLUE, ORANGE, RED, TEAL, GREEN].map((c, i) => (
                                <LegendItem key={c}><Swatch $color={c} />{kinds[i]}</LegendItem>
                            ))}
                        </LegendBox>
                        <DashLine />
                        <LegendBox>
                            <LegendTitle>下载数</LegendTitle>
                            {[['108', 4], ['2, 000', 11], ['4, 000', 15], ['6, 000', 18], ['8, 343', 22]].map(([t, s]) => (
                                <SizeItem key={t}><Dot $size={s} />{t}</SizeItem>
                            ))}
                        </LegendBox>
                        <DashLine />
                    </LegendPane>
                </Dashboard>
            </Body>

            <SheetTabs>
                <SourceTab>
                    <svg width="9" height="13" fill="none" stroke="currentColor"><rect x=".5" y="1.5" width="7" height="10" rx="2" /><path d="M.5 4.5h7" /></svg>
                    数据源
                </SourceTab>
                <CutTab $start>势</CutTab>
                {sheetTabs.map(t => <SheetTab key={t}>{t}</SheetTab>)}
                {boardTabs.map(t => <SheetTab key={t} $icon $active={t === '下载量分析'}><BoardIcon />{t}</SheetTab>)}
                <CutTab><StoryIcon />网</CutTab>
                <AddTab aria-label="新建工作表"><AddMark><path d="M10 13.5H3.5v-11h11V9M6.5 11V8M8.5 11V5M10.5 9V7" /></AddMark></AddTab>
                <AddTab aria-label="新建仪表板"><AddMark><path d="M10 12.5H3.5v-10h11V9M9 2.5v10M3.5 7.5h11" /></AddMark></AddTab>
                <AddTab aria-label="新建故事"><AddMark><path d="M10 12l-1 1-2-1.5H3.5v-9H7L9 4l2-1.5h3.5V9" /></AddMark></AddTab>
            </SheetTabs>
            <StatusBar>
                <StatusCell $width={190} />
                <StatusCell $width={38} />
                <StatusCell $width={39} />
                <StatusCell $width={69} />
                <StatusCell $width={73}>
                    <svg width="8" height="8" fill="currentColor"><path d="M0 0h1v8H0zM6 0v8L2 4z" /></svg>
                    <svg width="8" height="8" fill="currentColor"><path d="M6 0v8L2 4z" /></svg>
                    <svg width="8" height="8" fill="currentColor"><path d="M2 0v8l4-4z" /></svg>
                    <svg width="8" height="8" fill="currentColor"><path d="M7 0h1v8H7zM2 0v8l4-4z" /></svg>
                </StatusCell>
                <StatusCell $width={75}>
                    <svg width="11" height="11" fill="#bababa">{[0, 4, 8].map(y => [0, 4, 8].map(x => <rect key={`${x}-${y}`} x={x} y={y} width="3" height="3" />))}</svg>
                    <svg width="11" height="11" fill="#bababa"><path d="M0 0h11v7H0zM0 8h3v3H0zM4 8h3v3H4zM8 8h3v3H8z" /></svg>
                    <svg width="11" height="11" fill="#5f5f5f"><path d="M0 0h11v11H0z" /></svg>
                </StatusCell>
            </StatusBar>

            <EdgeBar />
            <ShowMe>
                <ShowMeTab>
                    <svg width="14" height="16"><path d="M0 0h11v3H0z" fill="#866f9a" /><path d="M0 4h14v3H0z" fill="#7c9cc9" /><path d="M0 8h5v3H0z" fill="#f1a27c" /><path d="M0 12h8v3H0z" fill="#f5707f" /></svg>
                    智能显示
                </ShowMeTab>
                <ShowMeBody>
                    <Cards>
                        {Object.entries(cards).map(([name, art]) => (
                            <Card key={name} aria-label={name}>
                                <CardArt viewBox="3 3 243 180">{art}</CardArt>
                            </Card>
                        ))}
                    </Cards>
                    <Hint>选择视图</Hint>
                </ShowMeBody>
            </ShowMe>
        </Window>
    );
}

export default App;
